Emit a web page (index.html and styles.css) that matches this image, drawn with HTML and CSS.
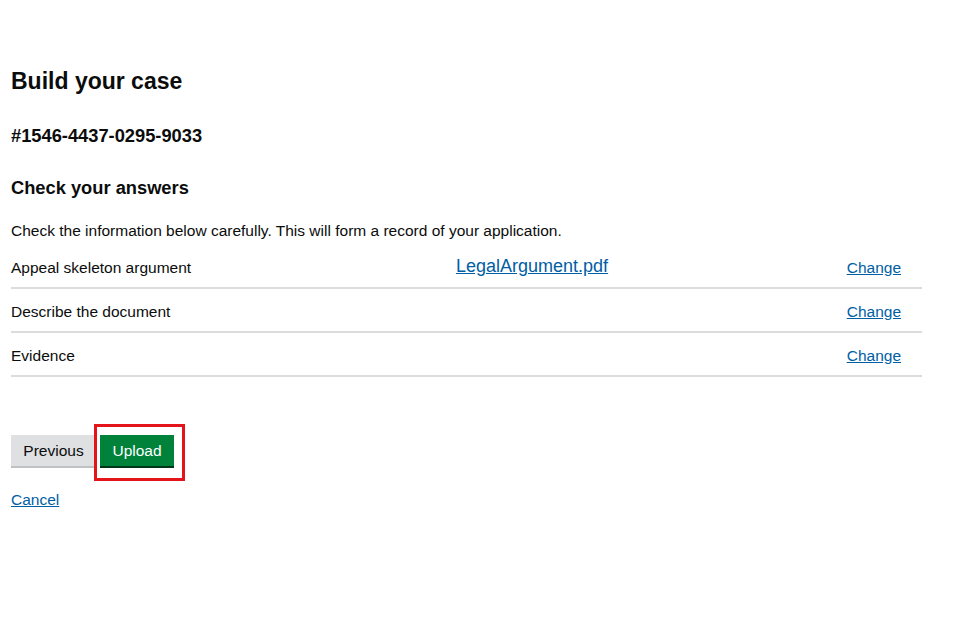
FILE: index.html
```html
<!DOCTYPE html>
<html lang="en">
<head>
<meta charset="utf-8">
<title>Build your case</title>
<link rel="stylesheet" href="styles.css">
</head>
<body>
<main class="page">
  <h1 class="title">Build your case</h1>
  <h2 class="case-ref">#1546-4437-0295-9033</h2>
  <h2 class="section">Check your answers</h2>
  <p class="intro">Check the information below carefully. This will form a record of your application.</p>
  <div class="summary">
    <div class="row">
      <div class="key">Appeal skeleton argument</div>
      <div class="value"><a href="#" class="file-link">LegalArgument.pdf</a></div>
      <div class="action"><a href="#">Change</a></div>
    </div>
    <div class="row">
      <div class="key">Describe the document</div>
      <div class="value"></div>
      <div class="action"><a href="#">Change</a></div>
    </div>
    <div class="row">
      <div class="key">Evidence</div>
      <div class="value"></div>
      <div class="action"><a href="#">Change</a></div>
    </div>
  </div>
  <div class="buttons">
    <button class="btn btn-secondary" type="button">Previous</button>
    <span class="highlight-wrap">
      <button class="btn btn-primary" type="submit">Upload</button>
      <span class="highlight"></span>
    </span>
  </div>
  <a href="#" class="cancel">Cancel</a>
</main>
</body>
</html>
```
FILE: styles.css
```css
* { box-sizing: border-box; }
html, body {
  margin: 0;
  padding: 0;
  background: #fff;
}
body {
  font-family: "Liberation Sans", Arial, sans-serif;
  color: #0b0c0c;
  font-size: 15.5px;
  line-height: 20px;
}
a { color: #005ea5; text-decoration: underline; }
.page {
  padding: 67px 0 0 11px;
  width: 922px;
  display: flex;
  flex-direction: column;
  align-items: flex-start;
}
.title {
  margin: 0;
  font-size: 23px;
  line-height: 28px;
  font-weight: 700;
}
.case-ref {
  margin: 30px 0 0;
  font-size: 18.3px;
  line-height: 22px;
  font-weight: 700;
}
.section {
  margin: 30px 0 0;
  font-size: 18.3px;
  line-height: 22px;
  font-weight: 700;
}
.intro {
  margin: 22px 0 0;
}
.summary {
  margin-top: 3px;
  width: 100%;
  display: flex;
  flex-direction: column;
}
.row {
  display: grid;
  grid-template-columns: 445px 1fr auto;
  align-items: center;
  padding: 13px 0 9px;
  border-bottom: 2px solid #dcdcdc;
  min-height: 44px;
}
.key, .value, .action { line-height: 20px; }
.file-link {
  font-size: 18px;
  line-height: 20px;
  position: relative;
  top: -1px;
}
.action { padding-right: 21px; }
.buttons {
  margin-top: 58px;
  display: flex;
  gap: 4px;
  align-items: flex-start;
}
.btn {
  font-family: "Liberation Sans", Arial, sans-serif;
  font-size: 15.5px;
  line-height: 20px;
  border: 0;
  border-radius: 0;
  padding: 6px 10px 5px;
  height: 31px;
  margin: 0 0 2px;
  cursor: pointer;
}
.btn-secondary {
  background: #dee0e2;
  color: #0b0c0c;
  box-shadow: 0 2px 0 #bfc1c3;
  width: 85px;
}
.btn-primary {
  background: #00823b;
  color: #fff;
  box-shadow: 0 2px 0 #003618;
  width: 74px;
}
.highlight-wrap {
  position: relative;
  display: inline-block;
}
.highlight {
  position: absolute;
  left: -6px;
  top: -11px;
  width: 91px;
  height: 57px;
  border: 3px solid #e4141b;
  pointer-events: none;
}
.cancel {
  margin-top: 22px;
}
```
